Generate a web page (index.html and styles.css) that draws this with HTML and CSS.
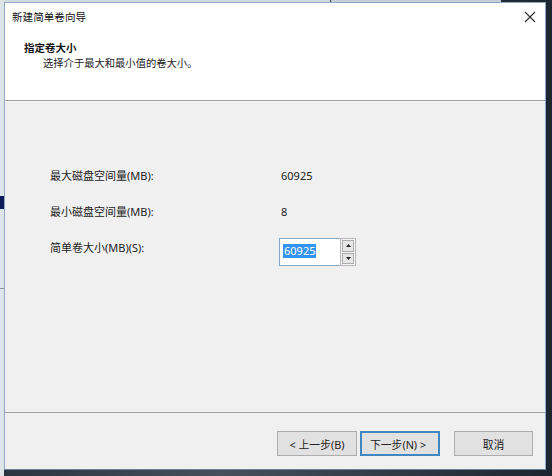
FILE: index.html
```html
<!DOCTYPE html>
<html lang="zh-CN">
<head>
<meta charset="utf-8">
<title>新建简单卷向导</title>
<link rel="stylesheet" href="styles.css">
</head>
<body>
<div class="desktop">
  <div class="window">
    <div class="titlebar">
      <span class="title">新建简单卷向导</span>
      <svg class="close" width="12" height="12" viewBox="0 0 12 12"><path d="M1 1 L11 11 M11 1 L1 11" stroke="#2b2b2b" stroke-width="1.1" fill="none"/></svg>
    </div>
    <div class="header">
      <div class="h-title">指定卷大小</div>
      <div class="h-sub">选择介于最大和最小值的卷大小。</div>
    </div>
    <div class="content">
      <div class="form">
        <div class="label">最大磁盘空间量(MB):</div>
        <div class="value">60925</div>
        <div class="label">最小磁盘空间量(MB):</div>
        <div class="value">8</div>
        <div class="label">简单卷大小(MB)(S):</div>
        <div class="spin">
          <div class="spin-input"><span class="sel">60925</span></div>
          <div class="spin-btns">
            <div class="spin-btn"><svg width="5" height="3" viewBox="0 0 5 3"><path d="M0 3 L2.5 0 L5 3 Z" fill="#222"/></svg></div>
            <div class="spin-btn"><svg width="5" height="3" viewBox="0 0 5 3"><path d="M0 0 L5 0 L2.5 3 Z" fill="#222"/></svg></div>
          </div>
        </div>
      </div>
    </div>
    <div class="footer">
      <div class="btn back">&lt; 上一步(B)</div>
      <div class="btn next">下一步(N) &gt;</div>
      <div class="btn cancel">取消</div>
    </div>
  </div>
</div>
</body>
</html>
```

FILE: styles.css
```css
* { box-sizing: border-box; }
html, body { margin: 0; padding: 0; }
body {
  width: 552px;
  height: 476px;
  overflow: hidden;
  font-family: "Noto Sans", "Noto Sans CJK SC", sans-serif;
  font-size: 10.5px;
  color: #1a1a1a;
}
.desktop {
  width: 552px;
  height: 476px;
  padding: 2px 6px 6px 4px;
  background:
    linear-gradient(#0c1a5a, #0c1a5a) 0 196px / 4px 13px no-repeat,
    linear-gradient(#8c96a0, #8c96a0) 0 288px / 4px 1px no-repeat,
    linear-gradient(#dfe4e9, #dfe4e9) 0 0 / 4px 476px no-repeat,
    linear-gradient(#d4d9de, #d4d9de) 0 0 / 330px 2px no-repeat,
    linear-gradient(#c9ced4, #c9ced4) 331px 0 / 170px 2px no-repeat,
    linear-gradient(90deg, #2a3440, #45505c 40%, #1c2530) ;
}
.window {
  width: 542px;
  height: 468px;
  border: 1px solid #8ea9c8;
  border-bottom-color: #6f8196;
  background: #f0f0f0;
  display: flex;
  flex-direction: column;
}
.titlebar {
  height: 28px;
  background: #fff;
  display: flex;
  align-items: center;
  justify-content: space-between;
  padding: 0 7px 1px 7px;
}
.title { font-size: 10.6px; color: #111; line-height: 14px; }
.close { margin-right: 2px; }
.header {
  height: 70px;
  background: #fff;
  padding: 10px 0 0 19px;
  border-bottom: 1px solid #a0a0a0;
  line-height: 15px;
  font-size: 10.5px;
}
.h-title { font-weight: bold; color: #111; }
.h-sub { padding-left: 19px; color: #222; font-size: 10.3px; }
.content {
  flex: 1;
  padding: 67px 0 0 45px;
  border-bottom: 1px solid #a0a0a0;
  box-shadow: inset 0 1px 0 #f8f8f8;
}
.form {
  display: grid;
  grid-template-columns: 229px auto;
  grid-template-rows: 16px 16px auto;
  row-gap: 20px;
  line-height: 16px;
  color: #222;
}
.value { padding-left: 2px; font-size: 11px; }
.label { font-size: 11px; }
.spin {
  display: flex;
  margin-top: -2px;
  height: 28px;
}
.spin-input {
  width: 61px;
  height: 28px;
  border: 1px solid #87a6c6;
  border-right: none;
  background: #fff;
  padding: 4px 0 0 3px;
}
.sel {
  display: inline-block;
  background: #3393f0;
  color: #fff;
  font-size: 11px;
  line-height: 14px;
  padding: 0 1px;
}
.spin-btns {
  width: 16px;
  height: 28px;
  border: 1px solid #b8b8b8;
  background: #f4f4f4;
  display: flex;
  flex-direction: column;
  gap: 1px;
  padding: 1px;
}
.spin-btn {
  flex: 1;
  background: #e6e6e6;
  border: 1px solid #adadad;
  display: flex;
  align-items: center;
  justify-content: center;
}
.footer {
  height: 56px;
  display: flex;
  justify-content: flex-end;
  align-items: flex-start;
  padding: 18px 12px 0 0;
}
.btn {
  height: 25px;
  width: 80px;
  background: #e1e1e1;
  border: 1px solid #adadad;
  display: flex;
  align-items: center;
  justify-content: center;
  color: #222;
  font-size: 10.8px;
}
.next {
  margin-left: 3px;
  border: 2px solid #3f86c3;
  justify-content: flex-start;
  padding-left: 8px;
}
.cancel { margin-left: 14px; width: 79px; }
```
